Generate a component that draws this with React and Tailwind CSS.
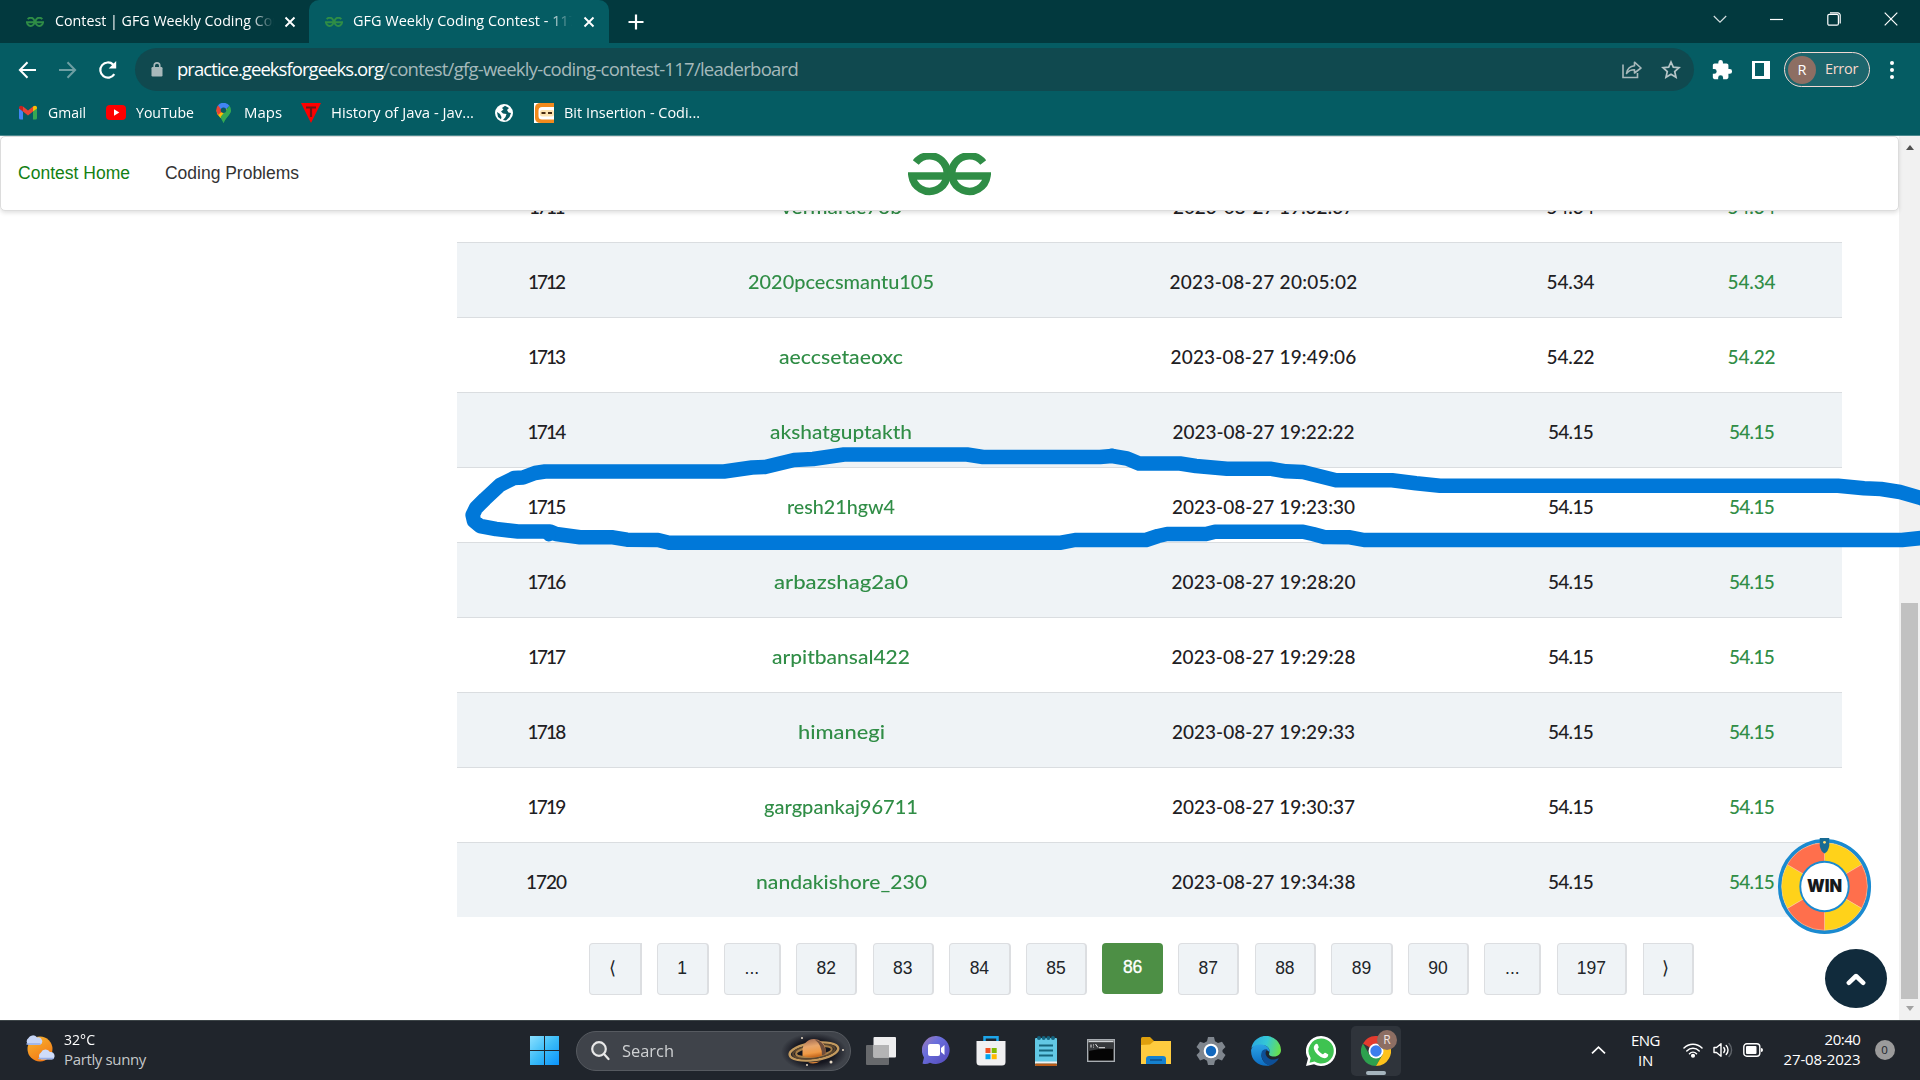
import React, { useLayoutEffect, useRef, useState } from "react";

// Single-line text fitted to a width, by its tracking or (with stretch) by scaling its glyphs.
function Fit({ w, stretch, className = "", children }) {
  const ref = useRef(null);
  const [style, setStyle] = useState({});
  useLayoutEffect(() => {
    const natural = ref.current.getBoundingClientRect().width;
    if (stretch) setStyle({ transform: `scaleX(${w / natural})`, transformOrigin: "0 50%" });
    else setStyle({ letterSpacing: (w - natural) / String(children).length });
  }, []);
  return (
    <span className={"block shrink-0 whitespace-nowrap " + className} style={{ width: w }}>
      <span ref={ref} className="inline-block" style={style}>
        {children}
      </span>
    </span>
  );
}

function GfgLogo({ className, stroke = 15 }) {
  return (
    <svg className={className} viewBox="0 0 166 86" preserveAspectRatio="none" fill="none" stroke="#2f8d46" strokeWidth={stroke}>
      <path d="M15.500 19 A35.500 35.500 0 1 1 8 46 H83" />
      <path d="M150.500 19 A35.500 35.500 0 1 0 158 46 H83" />
    </svg>
  );
}

function Cross({ className }) {
  return (
    <svg className={className} viewBox="0 0 12 12" stroke="#fff" strokeWidth="1.9">
      <path d="M1.500 1.500 10.500 10.500M10.500 1.500 1.500 10.500" />
    </svg>
  );
}

function Tabs() {
  return (
    <div className="flex h-[43px] items-center bg-[#02393e] text-[15px] text-white">
      <div className="flex h-full w-[309px] items-center rounded-br-[10px] pl-[26px]">
        <GfgLogo className="h-[10px] w-[18px]" stroke={17} />
        <div className="ml-[11px] w-[219px] overflow-hidden pb-[2px] [mask-image:linear-gradient(to_right,black_195px,transparent_219px)]">
          <Fit w={226} stretch>Contest | GFG Weekly Coding Con</Fit>
        </div>
        <Cross className="ml-[10px] h-[12px] w-[12px]" />
      </div>
      <div className="flex h-full w-[300px] items-center rounded-t-[10px] bg-[#055c63] pl-[16px]">
        <GfgLogo className="h-[10px] w-[18px]" stroke={17} />
        <div className="ml-[10px] w-[219px] overflow-hidden pb-[2px] [mask-image:linear-gradient(to_right,black_195px,transparent_219px)]">
          <Fit w={224} stretch>GFG Weekly Coding Contest - 117</Fit>
        </div>
        <Cross className="ml-[11px] h-[12px] w-[12px]" />
      </div>
      <svg className="ml-[19px] h-4 w-4" viewBox="0 0 16 16" stroke="#fff" strokeWidth="2.200">
        <path d="M8 .5V15.500M.5 8H15.500" />
      </svg>
      <div className="ml-auto flex items-center gap-[43.500px] pr-[22px] pb-[6px]">
        <svg className="h-[14px] w-[14px]" viewBox="0 0 14 14" fill="none" stroke="#d5dfe0" strokeWidth="1.200"><path d="M.8 4 7 10.200 13.200 4" /></svg>
        <svg className="h-[14px] w-[13px]" viewBox="0 0 13 14" stroke="#fff" strokeWidth="1.200"><path d="M0 7.500H13" /></svg>
        <svg className="h-[14px] w-[14px]" viewBox="0 0 14 14" fill="none" stroke="#fff" strokeWidth="1.200">
          <rect x=".8" y="2.300" width="10.600" height="10.900" rx="1.500" />
          <path d="M3 .9H10.800A2.400 2.400 0 0 1 13.200 3.300V11.500" />
        </svg>
        <svg className="h-[14px] w-[14px]" viewBox="0 0 14 14" stroke="#fff" strokeWidth="1.200"><path d="M.7 .7 13.300 13.300M13.300 .7 .7 13.300" /></svg>
      </div>
    </div>
  );
}

function Toolbar() {
  return (
    <div className="flex h-[53px] items-center pl-[18px]">
      <svg className="h-5 w-[19px]" viewBox="0 0 19 20" fill="none" stroke="#fff" strokeWidth="2"><path d="M18 10H2M9.500 2.300 1.900 10 9.500 17.700" /></svg>
      <svg className="ml-[21px] h-5 w-[19px]" viewBox="0 0 19 20" fill="none" stroke="#6e9fa3" strokeWidth="2"><path d="M1 10H17M9.500 2.300 17.100 10 9.500 17.700" /></svg>
      <svg className="ml-[21px] h-5 w-5" viewBox="0 0 20 20">
        <path d="M16.300 14.200A7.600 7.600 0 1 1 15.200 4.600" fill="none" stroke="#fff" strokeWidth="2.200" />
        <path d="M18.200 1V8.600H10.700Z" fill="#fff" />
      </svg>
      <div className="ml-[17px] flex h-[43px] w-[1559px] items-center rounded-full bg-[#10494f] pl-[16px] pr-[13px]">
        <svg className="h-[15px] w-[12px]" viewBox="0 0 12 15">
          <rect x=".5" y="5" width="11" height="9.500" rx="1.200" fill="#a9b9bb" />
          <path d="M3.200 6V3.700A2.800 2.800 0 0 1 8.800 3.700V6" fill="none" stroke="#a9b9bb" strokeWidth="1.600" />
        </svg>
        <div className="ml-[14px] flex pb-px text-[18.500px]">
          <Fit w={206} className="text-white">practice.geeksforgeeks.org</Fit>
          <Fit w={415} className="text-[#a5b9bb]">/contest/gfg-weekly-coding-contest-117/leaderboard</Fit>
        </div>
        <svg className="ml-auto h-[19px] w-5" viewBox="0 0 20 19" fill="none" stroke="#a9b9bb" strokeWidth="1.600">
          <path d="M1 4.500V17.500H15.500V13" />
          <path d="M4.500 13.500C5.200 9 8 6.200 12.500 5.800V2.200L19 8 12.500 13V9.700C9 9.600 6.800 10.500 4.500 13.500Z" strokeLinejoin="round" />
        </svg>
        <svg className="ml-[19px] h-[19px] w-5" viewBox="0 0 20 19" fill="none" stroke="#b6c5c7" strokeWidth="1.700">
          <path d="M10 2 12.300 7.200 18 7.700 13.700 11.500 15 17.200 10 14.200 5 17.200 6.300 11.500 2 7.700 7.700 7.200Z" />
        </svg>
      </div>
      <svg className="ml-[17px] h-[22px] w-[22px]" viewBox="0 0 24 24" fill="#fff">
        <path d="M20.500 11H19V7c0-1.100-.9-2-2-2h-4V3.500a2.500 2.500 0 0 0-5 0V5H4c-1.100 0-2 .9-2 2v3.800h1.500a2.700 2.700 0 0 1 0 5.400H2V20c0 1.100.9 2 2 2h3.800v-1.500a2.700 2.700 0 0 1 5.400 0V22H17c1.100 0 2-.9 2-2v-4h1.500a2.500 2.500 0 0 0 0-5z" />
      </svg>
      <div className="ml-[19px] flex h-[18px] w-[18px] bg-white p-[2.500px]"><div className="h-full w-[9px] bg-[#055c63]" /></div>
      <div className="ml-[14px] flex h-[35px] w-[86px] items-center rounded-full border border-[#f2d9d3] bg-[#1c656c] pl-[3px] text-[14.500px] text-[#f9d8cd]">
        <div className="flex h-7 w-7 items-center justify-center rounded-full bg-[#8d6e63] text-white">R</div>
        <Fit w={33} className="ml-[9px] pb-[2px]">Error</Fit>
      </div>
      <div className="ml-[20px] flex flex-col gap-[3px]">
        <i className="h-1 w-1 rounded-full bg-white" />
        <i className="h-1 w-1 rounded-full bg-white" />
        <i className="h-1 w-1 rounded-full bg-white" />
      </div>
    </div>
  );
}

function Bookmarks() {
  return (
    <div className="flex h-[40px] items-center border-b border-[#4c8a8f] pl-[19px] pb-[6px] text-[15px] text-white">
      <svg className="h-[15px] w-[18px]" viewBox="0 0 18 14">
        <path d="M0 2V12.500Q0 14 1.500 14H4V6Z" fill="#4285f4" />
        <path d="M18 2V12.500Q18 14 16.500 14H14V6Z" fill="#34a853" />
        <path d="M4 1 9 5 14 1V6L9 10 4 6Z" fill="#ea4335" />
        <path d="M0 2.500C0 .2 2 -.4 4 1V6L0 3Z" fill="#c5221f" />
        <path d="M18 2.500C18 .2 16 -.4 14 1V6L18 3Z" fill="#fbbc04" />
      </svg>
      <Fit w={38} stretch className="ml-[11px]">Gmail</Fit>
      <svg className="ml-[20px] h-[15px] w-[20px]" viewBox="0 0 20 15"><rect width="20" height="15" rx="4" fill="#f00" /><path d="M8 4.300 13.300 7.500 8 10.700Z" fill="#fff" /></svg>
      <Fit w={58} stretch className="ml-[10px]">YouTube</Fit>
      <svg className="ml-[22px] h-5 w-[15px]" viewBox="0 0 15 20">
        <path d="M0 7C0 11 4.500 13 7.500 20 10.500 13 15 11 15 7Z" fill="#34a853" />
        <path d="M.8 10.500 9 2 12 9 4.500 15Z" fill="#fbbc04" />
        <path d="M.3 8A7.500 7.500 0 0 1 2 2.200L8 7 2 12Z" fill="#ea4335" />
        <path d="M2 2.200A7.500 7.500 0 0 1 13.500 2.800L7 9Z" fill="#4285f4" />
        <path d="M13.500 2.800A7.500 7.500 0 0 1 14 10.500C12.500 13 9 16 7.500 20 6.500 17 5 15 4.500 14Z" fill="#34a853" />
        <circle cx="7.500" cy="7.200" r="2.700" fill="#0b5962" />
      </svg>
      <Fit w={38} stretch className="ml-[13px]">Maps</Fit>
      <svg className="ml-[19px] h-5 w-5" viewBox="0 0 20 20"><path d="M0 0H20L10 20Z" fill="#f00" /><path d="M5 4.500H15M10 4.500V14" stroke="#6a1717" strokeWidth="2.200" /></svg>
      <Fit w={143} stretch className="ml-[10px]">History of Java - Jav...</Fit>
      <svg className="ml-[21px] h-[18px] w-[18px]" viewBox="0 0 18 18"><circle cx="9" cy="9" r="9" fill="#fff" /><path d="M10 1.800 7 4 8.500 5.500 6 7.500 8 9.500 11.500 10 10.500 13 8 16 11 16.500 14.500 13 16 9 13.500 8.500 12 6 14 4ZM2 8 5 10 6.500 13 6 15.200 3 13Z" fill="#075961" /></svg>
      <svg className="ml-[21px] h-5 w-5" viewBox="0 0 20 20"><rect width="20" height="20" fill="#fff" /><path d="M20 0H7Q1 0 1 5V15Q1 20 7 20H20V16.500H8Q4.500 16.500 4.500 13V8Q4.500 4 8 4H20Z" fill="#f28a1c" /><rect x="6" y="7" width="14" height="6.500" rx="2" fill="#fde3b0" /><path d="M7.500 10H11.500M14 10H18" stroke="#4a2c11" strokeWidth="2.200" /></svg>
      <Fit w={136} stretch className="ml-[10px]">Bit Insertion - Codi...</Fit>
    </div>
  );
}

const rows = [
  ["1711", 34, "vermarac76b", 121, "2023-08-27 19:32:37", 181, "54.34", 48],
  ["1712", 36, "2020pcecsmantu105", 186, "2023-08-27 20:05:02", 188, "54.34", 48],
  ["1713", 36, "aeccsetaeoxc", 124, "2023-08-27 19:49:06", 186, "54.22", 48],
  ["1714", 37, "akshatguptakth", 142, "2023-08-27 19:22:22", 182, "54.15", 45],
  ["1715", 37, "resh21hgw4", 108, "2023-08-27 19:23:30", 183, "54.15", 45],
  ["1716", 37, "arbazshag2a0", 134, "2023-08-27 19:28:20", 184, "54.15", 45],
  ["1717", 36, "arpitbansal422", 138, "2023-08-27 19:29:28", 184, "54.15", 45],
  ["1718", 37, "himanegi", 87, "2023-08-27 19:29:33", 183, "54.15", 45],
  ["1719", 37, "gargpankaj96711", 154, "2023-08-27 19:30:37", 183, "54.15", 45],
  ["1720", 40, "nandakishore_230", 171, "2023-08-27 19:34:38", 184, "54.15", 45],
];

function Table() {
  return (
    <div className="-mt-[44px] ml-[457px] w-[1385px] font-['Lato'] text-[19px] font-medium text-[#1e2023]">
      {rows.map(([rank, rw, name, nw, time, tw, score, sw], i) => (
        <div
          key={rank}
          className={
            "grid h-[75px] grid-cols-[178px_412px_433px_181px_181px] items-center justify-items-center border-t border-[#dadde0] pt-[5px] " +
            (i % 2 ? "bg-[#eff3f6]" : "bg-white")
          }
        >
          <Fit w={rw}>{rank}</Fit>
          <Fit w={nw} stretch className="text-[#308d46]">{name}</Fit>
          <Fit w={tw}>{time}</Fit>
          <Fit w={sw}>{score}</Fit>
          <Fit w={sw} className="text-[#308d46]">{score}</Fit>
        </div>
      ))}
    </div>
  );
}

const pages = [
  ["⟨", "w-[52.500px] rounded-r-none pr-[4px]"],
  ["1", "w-[51.900px]"],
  ["...", "w-[57px]"],
  ["82", "w-[61.300px]"],
  ["83", "w-[61.300px]"],
  ["84", "w-[61.300px]"],
  ["85", "w-[61.300px]"],
  ["86", ""],
  ["87", "w-[61.300px]"],
  ["88", "w-[61.300px]"],
  ["89", "w-[61.300px]"],
  ["90", "w-[61.300px]"],
  ["...", "w-[57px]"],
  ["197", "w-[70.700px]"],
  ["⟩", "w-[51.500px] rounded-l-none pr-[4px]"],
];

function Pagination() {
  return (
    <div className="mt-[26px] ml-[589px] flex gap-[15.260px] font-['Liberation_Sans'] text-[17.500px] text-[#212529]">
      {pages.map(([label, cls], i) =>
        label === "86" ? (
          <div key={i} className="flex h-[51px] w-[60.600px] items-center justify-center rounded-[4px] bg-[#4d8f45] pb-[3px] text-white [-webkit-text-stroke:0.300px_white]">
            {label}
          </div>
        ) : (
          <div key={i} className={"flex h-[52px] items-center justify-center rounded-[4px] border border-r-2 border-[#dcdee1] bg-[#eff3f6] pb-[2px] " + cls}>
            {label}
          </div>
        )
      )}
    </div>
  );
}

function Wheel() {
  const sector = (a) => {
    const p = (d) => [50 + 43 * Math.sin((d * Math.PI) / 180), 50 - 43 * Math.cos((d * Math.PI) / 180)].join(" ");
    return `M50 50L${p(a)}A43 43 0 0 1 ${p(a + 60)}Z`;
  };
  return (
    <svg className="absolute left-[1777px] top-[837px] h-[97px] w-[95px]" viewBox="0 0 100 100" preserveAspectRatio="none">
      <circle cx="50" cy="51" r="47" fill="#fff" stroke="#1a8ad0" strokeWidth="4" />
      <g transform="translate(0 1) translate(50 50) scale(1.05) translate(-50 -50)" stroke="#f9c9a0" strokeWidth=".5">
        {[0, 60, 120, 180, 240, 300].map((a, i) => (
          <path key={a} d={sector(a)} fill={i % 2 ? "#ff6f4c" : "#ffd21a"} />
        ))}
      </g>
      <circle cx="50" cy="51" r="25.500" fill="#fff" stroke="#1a8ad0" strokeWidth="2" />
      <path d="M45 1H55V9Q54 15 50 17 46 15 45 9Z" fill="#176b94" />
      <circle cx="50" cy="5.500" r="1.500" fill="#ffe07a" />
      <text x="50" y="57" textAnchor="middle" textLength="37" lengthAdjust="spacingAndGlyphs" fontFamily="Inter" fontWeight="900" fontSize="17.500" fill="#16181c">WIN</text>
    </svg>
  );
}

function Page() {
  return (
    <div className="flex h-[884px] bg-white">
      <div className="w-[1899px]">
        <div className="relative z-10 flex h-[75px] items-center rounded-[5px] border border-[#dcdcdc] bg-white pl-[17px] font-['Liberation_Sans'] text-[17.500px] shadow-[0_2px_4px_rgba(0,0,0,0.12)]">
          <Fit w={112} className="text-[#138013]">Contest Home</Fit>
          <Fit w={134} className="ml-[35px] text-[#333]">Coding Problems</Fit>
          <GfgLogo className="ml-[609px] mt-px h-[43px] w-[83px]" />
        </div>
        <div className="h-[809px] overflow-hidden">
          <Table />
          <Pagination />
        </div>
      </div>
      <div className="flex w-[21px] flex-col items-center bg-[#f1f1f1]">
        <div className="mt-[9px] border-x-[4.500px] border-b-[5px] border-x-transparent border-b-[#505050]" />
        <div className="mt-[453px] h-[396px] w-[17px] bg-[#c1c1c1]" />
        <div className="mt-[7px] border-x-[4.500px] border-t-[5px] border-x-transparent border-t-[#a3a3a3]" />
      </div>
    </div>
  );
}

function Annotation() {
  return (
    <svg className="pointer-events-none absolute left-0 top-0 z-20 h-[1080px] w-[1920px]" viewBox="0 0 1920 1080" fill="none" stroke="#0078d9" strokeWidth="14.500" strokeLinejoin="round">
      <path d="M1926 500 1920 497.700 1900 492 1881 489 1864 488.300 1838 485.700H1440L1416 483.300 1392 480.300H1336L1319 476 1303 472 1286 471.300 1270 468.700H1227L1196 466 1180 463.500H1139L1127 458.500 1112 456 1100 457H983L967 454.500H844L813 459 794 460 765 467 752 467.500 724 471.500H545L535 473 523 477.500 514 478 500 485 485 499 476 508 472.600 515 474 521 480 526 496 529 518 531.500H550L556 534 580 537.300H613L627 539.700 658 540 669 542.700H1061L1075 540H1146L1158 536 1167 534H1206L1215 531.700H1303L1313 534 1324 537 1350 537.300 1364 540H1902L1926 537.500" />
      <path d="M547 532.500 549 535" strokeLinecap="round" strokeWidth="13" />
      <path d="M1112 455 1114 456" strokeLinecap="round" strokeWidth="13" />
    </svg>
  );
}

function Slot({ children, active }) {
  return (
    <div className="flex w-[55px] items-center justify-center">
      <div className={"relative flex h-[50px] w-[50px] items-center justify-center rounded-[5px] " + (active ? "bg-[#2f343b]" : "")}>{children}</div>
    </div>
  );
}

function Chrome() {
  return (
    <svg className="h-[30px] w-[30px]" viewBox="0 0 30 30">
      <path d="M2 7.500A15 15 0 0 1 28 7.500H15L8.500 11.200Z" fill="#e33b2e" />
      <path d="M2 7.500A15 15 0 0 0 15 30L21.500 18.800 8.500 18.800Z" fill="#2da04e" />
      <path d="M28 7.500A15 15 0 0 1 15 30L21.500 18.800 21 7.500Z" fill="#fdc21c" />
      <circle cx="15" cy="15" r="7.500" fill="#fff" />
      <circle cx="15" cy="15" r="5.700" fill="#3b7ded" />
    </svg>
  );
}

function Taskbar() {
  return (
    <div className="flex h-[60px] items-center border-t border-[#3c4447] bg-[#20252c] text-[15px] text-white">
      <svg className="-mt-[5px] ml-[25px] h-[30px] w-[31px] shrink-0" viewBox="0 0 31 30">
        <defs>
          <linearGradient id="sun" x1="0" y1="0" x2=".5" y2="1"><stop stopColor="#f7b733" /><stop offset="1" stopColor="#f47c16" /></linearGradient>
        </defs>
        <circle cx="15" cy="16" r="12.500" fill="url(#sun)" />
        <path d="M4 12A4 4 0 0 1 3.500 5 5 5 0 0 1 12 4.500 3.800 3.800 0 0 1 14.500 12Z" fill="#c6d5f7" />
        <path d="M16 26.500A4 4 0 0 1 16 19.500 5 5 0 0 1 25 19 3.900 3.900 0 0 1 27 26.500Z" fill="#cfdcfa" />
        <path d="M2 11H15M14 25.500H28" stroke="#96aee8" strokeWidth="1.500" strokeLinecap="round" />
      </svg>
      <div className="-mt-[4px] ml-2 w-[466px] leading-[20px]">
        <Fit w={31} stretch>32°C</Fit>
        <Fit w={82} className="text-[#c5c8ca]">Partly sunny</Fit>
      </div>
      <svg className="h-[29px] w-[29px] shrink-0" viewBox="0 0 29 29">
        <defs><linearGradient id="win" x1="0" y1="0" x2="1" y2="1"><stop stopColor="#8be0ff" /><stop offset=".5" stopColor="#3bbcf8" /><stop offset="1" stopColor="#0a93fb" /></linearGradient></defs>
        <path d="M0 0H14V14H0ZM15 0H29V14H15ZM0 15H14V29H0ZM15 15H29V29H15Z" fill="url(#win)" />
      </svg>
      <div className="ml-[17px] flex h-10 w-[275px] shrink-0 items-center rounded-full border border-[#565a60] bg-[#3f434a] pl-[14px] text-[17px] text-[#cfd1d3]">
        <svg className="h-[20px] w-[19px]" viewBox="0 0 19 20" fill="none" stroke="#e8e8e8" strokeWidth="2.200" strokeLinecap="round"><circle cx="8" cy="8" r="6.800" fill="#565b60" /><path d="M13 13 17.500 18" /></svg>
        <Fit w={52} stretch className="ml-[12px]">Search</Fit>
        <svg className="ml-[106px] h-[38px] w-[68px]" viewBox="0 0 68 38">
          <defs>
            <radialGradient id="space"><stop offset=".6" stopColor="#15161f" /><stop offset="1" stopColor="#15161f" stopOpacity="0" /></radialGradient>
            <linearGradient id="planet" x1="0" y1="0" x2=".2" y2="1"><stop stopColor="#9c6650" /><stop offset=".45" stopColor="#e8a66c" /><stop offset=".8" stopColor="#f09a45" /><stop offset="1" stopColor="#c96c20" /></linearGradient>
          </defs>
          <ellipse cx="34" cy="20" rx="33" ry="19" fill="url(#space)" />
          <g transform="rotate(-8 34 20)" fill="none">
            <ellipse cx="34" cy="19.500" rx="24.500" ry="8.500" stroke="#c39a5e" strokeWidth="2.500" />
            <ellipse cx="34" cy="19.500" rx="21" ry="6.500" stroke="#5a452e" strokeWidth="2.200" />
            <ellipse cx="34" cy="19.500" rx="18" ry="5" stroke="#a67f49" strokeWidth="2" />
          </g>
          <path d="M22.500 19A11.500 11.500 0 0 1 45.500 18V22Q34 28 22.500 24Z" fill="url(#planet)" />
          <path d="M35 7.800A11.500 11.500 0 0 1 45.500 18V22L42 23.500Q42 13 35 7.800Z" fill="#6d4d3c" />
          <path d="M28 30.500Q34 33 40 29.500Z" fill="#d98237" />
          <g fill="#e7d9c5"><circle cx="22" cy="6" r="1" /><circle cx="51" cy="30" r="1.500" /><circle cx="27" cy="33" r="1" /><circle cx="63" cy="18" r="1" /></g>
        </svg>
      </div>
      <div className="ml-[2.500px] flex shrink-0">
        <Slot>
          <svg className="h-7 w-[30px]" viewBox="0 0 30 28">
            <rect y="8" width="23" height="20" rx="1" fill="#67696c" /><rect x="7.500" width="22.500" height="20.500" rx="1" fill="#eeeeef" /><path d="M7.500 8H23V20.500H7.500Z" fill="#b4b4b5" />
          </svg>
        </Slot>
        <Slot>
          <svg className="h-[29px] w-[29px]" viewBox="0 0 29 29">
            <defs><linearGradient id="chat" x1="0" y1="0" x2=".8" y2=".8"><stop stopColor="#a57bb0" /><stop offset=".45" stopColor="#6a6fdc" /><stop offset="1" stopColor="#5a54c4" /></linearGradient></defs>
            <path d="M14.500 0A14 14 0 1 1 8 26.800Q4 29 .5 27.500L2 21.500A14.200 14.200 0 0 1 14.500 0Z" fill="url(#chat)" />
            <rect x="6" y="8" width="12" height="12" rx="2" fill="#fff" /><path d="M19 12 22.500 9V19L19 16Z" fill="#fff" />
          </svg>
        </Slot>
        <Slot>
          <svg className="h-[30px] w-[30px]" viewBox="0 0 30 30">
            <path d="M8.500 7V1.300H21.500V7" fill="none" stroke="#1da5e9" strokeWidth="2.500" />
            <path d="M.5 5H29.500V26Q29.500 29.500 26 29.500H4Q.5 29.500 .5 26Z" fill="#f0f0f1" />
            <path d="M9.500 12H14.500V17H9.500Z" fill="#f25022" /><path d="M15.700 12H20.700V17H15.700Z" fill="#7fba00" /><path d="M9.500 18.200H14.500V23.200H9.500Z" fill="#00a4ef" /><path d="M15.700 18.200H20.700V23.200H15.700Z" fill="#ffb900" />
          </svg>
        </Slot>
        <Slot>
          <svg className="h-[30px] w-[22px]" viewBox="0 0 22 30">
            <rect y="2" width="22" height="28" rx="1" fill="#62c8e4" /><rect y="25.500" width="22" height="2" fill="#f0f0f0" /><rect y="27.500" width="22" height="2.500" rx="1" fill="#b85b18" />
            <path d="M4 9.500H18M4 14.500H18M4 19.500H18" stroke="#16657c" strokeWidth="1.800" />
            <g fill="#15647f"><circle cx="4" cy="2" r="2" /><circle cx="8.700" cy="2" r="2" /><circle cx="13.400" cy="2" r="2" /><circle cx="18" cy="2" r="2" /></g>
          </svg>
        </Slot>
        <Slot>
          <svg className="-mt-px h-[23px] w-7" viewBox="0 0 28 23">
            <rect x=".7" y=".7" width="26.600" height="21.600" fill="#050505" stroke="#a8adb2" strokeWidth="1.400" /><path d="M1.500 2.500H26.500" stroke="#d0d4d7" strokeWidth="2" />
            <path d="M1.500 12Q15 9 26.500 10V3.500H1.500Z" fill="#36393c" /><path d="M4 5.500V8.500M6.500 5.500V6.500M6.500 7.700V8.500M8.500 5 11 8.500M12 8.700H18" stroke="#e5e5e5" strokeWidth="1" />
          </svg>
        </Slot>
        <Slot>
          <svg className="h-[27px] w-[30px]" viewBox="0 0 30 27">
            <path d="M0 1.500Q0 0 1.500 0H9L13 4V9H0Z" fill="#dfa00d" /><path d="M0 8 9 7.500 13 4H30V27H0Z" fill="#ffcc3f" /><path d="M5 27V22Q5 19 8 19H22Q25 19 25 22V27Z" fill="#1581cf" /><path d="M9 23H21" stroke="#0c4f8b" strokeWidth="1.500" />
          </svg>
        </Slot>
        <Slot>
          <svg className="h-[30px] w-[30px]" viewBox="0 0 30 30">
            <path d="M12 1H18L19 5.200 22 7 26 5.700 29.500 11 26.500 14V16L29.500 19 26 24.500 22 23 19 24.800 18 29H12L11 24.800 8 23 4 24.500 .5 19 3.500 16V14L.5 11 4 5.700 8 7 11 5.200Z" fill="#7f868e" />
            <circle cx="15" cy="15" r="7.300" fill="#fff" /><circle cx="15" cy="15" r="5.200" fill="#1268bd" />
          </svg>
        </Slot>
        <Slot>
          <svg className="h-[30px] w-[30px]" viewBox="0 0 30 30">
            <defs>
              <linearGradient id="edgeTop" x1="0" y1=".3" x2="1" y2=".5"><stop stopColor="#2aa9e0" /><stop offset=".5" stopColor="#35c8d6" /><stop offset="1" stopColor="#68e04b" /></linearGradient>
              <linearGradient id="edgeLow" x1="0" y1="0" x2="0" y2="1"><stop stopColor="#2ba4e5" /><stop offset="1" stopColor="#0c6cc2" /></linearGradient>
            </defs>
            <path d="M.3 12A15 15 0 0 1 30 14C30 18 27 20.500 23 20.500 19 20.500 17.500 19 18.200 17.300 20 13 16 9 11 9 6 9 2 10.500 .3 12Z" fill="url(#edgeTop)" />
            <path d="M.1 14C1 9.500 6 8 10.500 8.500 16 9 19.500 13 18.500 16.500 17 12.500 11 13 10.500 19 10.200 24 14 28 19 29.400 9 31.500 -.5 25 .1 14Z" fill="url(#edgeLow)" />
            <path d="M10.500 18C10 14 14 12.500 16.500 13.500 12 17 16 24 23 23.500 25 23.300 27 22.500 28 22 26 26 22.500 28.500 19 29.400 14 28.500 10.500 24 10.500 18Z" fill="#0d4f97" />
          </svg>
        </Slot>
        <Slot>
          <svg className="h-[30px] w-[30px]" viewBox="0 0 30 30">
            <path d="M15 0A15 15 0 1 1 8 28.200L0 30 2 22.500A15 15 0 0 1 15 0Z" fill="#fff" />
            <path d="M15 2.500A12.500 12.500 0 1 1 8.500 25.500L3.500 26.700 4.700 22A12.500 12.500 0 0 1 15 2.500Z" fill="#3ec351" />
            <path d="M10.700 7.800C11.800 7.300 12.300 10 12.700 11 13 12 11.500 12.600 11.700 13.300 12.500 15.300 14.500 17.300 16.700 18.200 17.500 18.500 18.300 16.600 19 16.700 20 17 22.300 18.200 22.300 18.500 22.300 21 20.300 22.200 18.500 22.200 13.500 21.500 8.500 16.500 7.800 12.300 7.600 10.500 8.800 8 10.700 7.800Z" fill="#fff" />
          </svg>
        </Slot>
        <Slot active>
          <Chrome />
          <div className="absolute left-[26px] top-[4px] flex h-5 w-5 items-center justify-center rounded-full bg-[#8d6e63] text-[12px] text-[#f1e5e1]">R</div>
          <div className="absolute bottom-[1px] left-[15px] h-1 w-5 rounded-full bg-[#a5b4bd]" />
        </Slot>
      </div>
      <svg className="ml-[187px] -mt-px h-2 w-[15px] shrink-0" viewBox="0 0 15 8" fill="none" stroke="#fff" strokeWidth="1.700"><path d="M1 7.300 7.500 1.200 14 7.300" /></svg>
      <div className="-mt-[2px] ml-[25px] flex w-[30px] flex-col items-center leading-[20px]">
        <Fit w={29}>ENG</Fit>
        <Fit w={15}>IN</Fit>
      </div>
      <svg className="ml-[22px] -mt-[2px] h-4 w-5 shrink-0" viewBox="0 0 20 16" fill="none" stroke="#fff" strokeWidth="1.500" strokeLinecap="round">
        <path d="M1 6A12.500 12.500 0 0 1 19 6M3.800 9A8.600 8.600 0 0 1 16.200 9M6.500 11.700A5 5 0 0 1 13.500 11.700" /><circle cx="10" cy="13.800" r="1.300" fill="#fff" />
      </svg>
      <svg className="ml-[10px] -mt-px h-4 w-5 shrink-0" viewBox="0 0 20 16" fill="none" stroke="#fff" strokeWidth="1.400" strokeLinejoin="round" strokeLinecap="round">
        <path d="M1 5.500H3.500L8 1.800V14.200L3.500 10.500H1Z" /><path d="M10.800 5.500A4 4 0 0 1 10.800 10.500M13.200 3.500A6.500 6.500 0 0 1 13.200 12.500" /><path d="M16 1.500A9.500 9.500 0 0 1 16 14.500" stroke="#5f646a" />
      </svg>
      <svg className="ml-[10px] -mt-px h-[14px] w-5 shrink-0" viewBox="0 0 20 14">
        <rect x=".8" y=".8" width="16" height="12.400" rx="3" fill="none" stroke="#fff" strokeWidth="1.400" /><rect x="3" y="3" width="10.500" height="8" rx="1" fill="#fff" /><path d="M18 5Q20 5 20 7T18 9Z" fill="#fff" />
      </svg>
      <div className="-mt-[4px] ml-[20px] flex w-[78px] flex-col items-end leading-[20px]">
        <Fit w={36}>20:40</Fit>
        <Fit w={77}>27-08-2023</Fit>
      </div>
      <div className="ml-[14px] -mt-px flex h-5 w-5 items-center justify-center rounded-full bg-[#9b9b9b] text-[11.500px] text-[#20252c]">0</div>
    </div>
  );
}

export default function App() {
  return (
    <div className="relative h-[1080px] w-[1920px] overflow-hidden bg-[#055c63] font-['Open_Sans','Noto_Sans',sans-serif]">
      <Tabs />
      <Toolbar />
      <Bookmarks />
      <Page />
      <Taskbar />
      <Wheel />
      <div className="absolute left-[1825px] top-[949px] flex h-[59px] w-[62px] items-center justify-center rounded-[50%] bg-[#112b3c]">
        <svg className="h-[14px] w-[20px]" viewBox="0 0 20 14" fill="none" stroke="#fff" strokeWidth="4.500" strokeLinecap="round" strokeLinejoin="round"><path d="M2.800 10.800 10 4 17.200 10.800" /></svg>
      </div>
      <Annotation />
    </div>
  );
}
